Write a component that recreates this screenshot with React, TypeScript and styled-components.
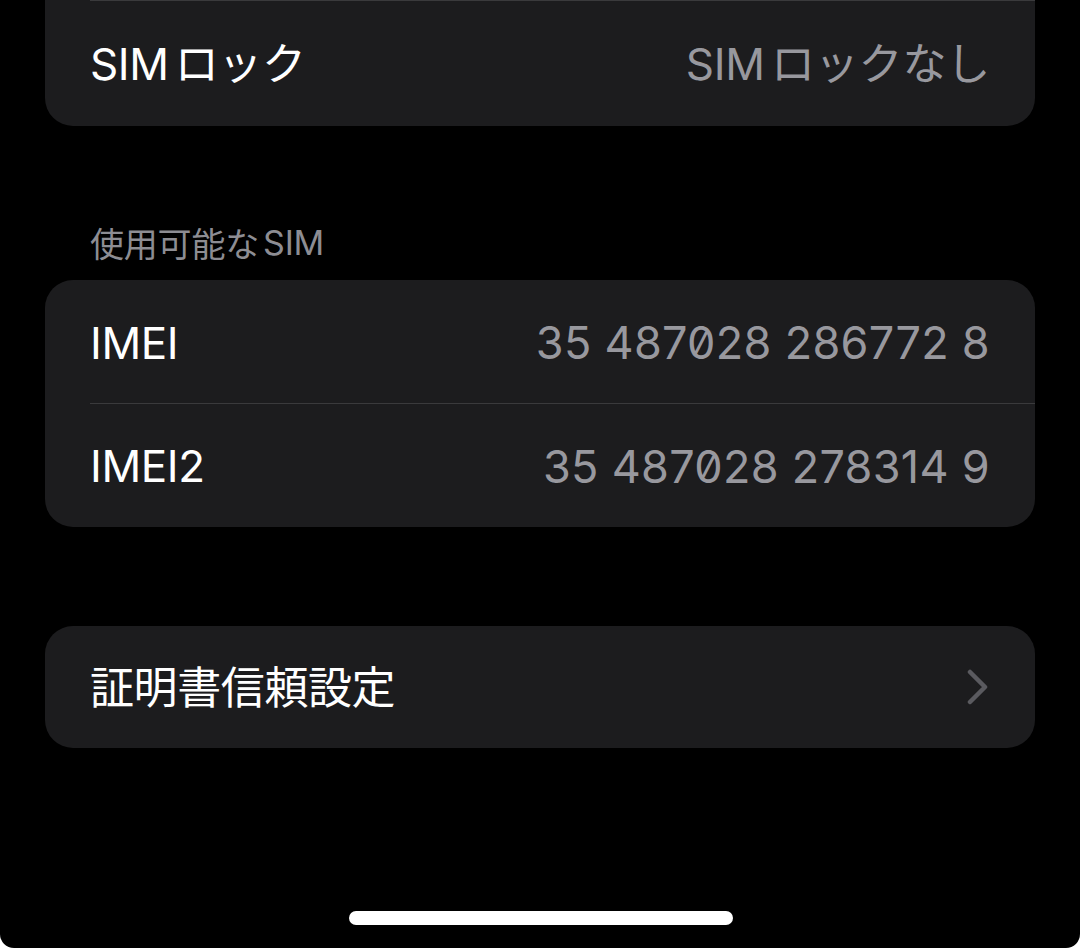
import { FC, ReactNode } from "react";
import styled, { createGlobalStyle } from "styled-components";

const Global = createGlobalStyle`
  html, body {
    margin: 0;
    padding: 0;
    background: #ffffff;
  }
  * {
    box-sizing: border-box;
  }
`;

const Screen = styled.main`
  width: 1080px;
  height: 948px;
  background: #000;
  border-radius: 0 0 14px 14px;
  font-family: Inter, "Noto Sans CJK JP", sans-serif;
  display: flex;
  flex-direction: column;
  padding: 0 45px;
  position: relative;
  overflow: hidden;
`;

const Group = styled.section<{ $cut?: boolean; $gap?: number }>`
  background: #1c1c1e;
  border-radius: ${(p) => (p.$cut ? "0 0 28px 28px" : "28px")};
  margin-top: ${(p) => p.$gap ?? 0}px;
  overflow: hidden;
`;

const Row = styled.div<{ $line?: boolean; $h?: number }>`
  height: ${(p) => p.$h ?? (p.$line ? 124 : 123)}px;
  display: flex;
  align-items: center;
  justify-content: space-between;
  padding: 0 45px;
  position: relative;

  &::before {
    content: "";
    display: ${(p) => (p.$line ? "block" : "none")};
    position: absolute;
    top: 0;
    left: 45px;
    right: 0;
    height: 1px;
    background: #3a3a3c;
  }
`;

const Label = styled.span`
  color: #ffffff;
  font-size: 44px;
  letter-spacing: -0.4px;
  line-height: 1;
  padding-top: 2px;
`;

const Value = styled.span<{ $digits?: boolean }>`
  color: #98989e;
  font-size: ${(p) => (p.$digits ? 45 : 44)}px;
  letter-spacing: ${(p) => (p.$digits ? "0.3px" : "-0.2px")};
  line-height: 1;
  padding-top: 2px;
  font-feature-settings: "zero" 1;
`;

const Latin = styled.span`
  margin-right: 0.14em;
`;

const Header = styled.h2`
  margin: 96px 0 18px;
  padding: 0 45px;
  height: 40px;
  display: flex;
  align-items: center;
  color: #8d8d93;
  font-size: 34px;
  font-weight: 400;
  letter-spacing: -0.2px;
`;

const HeaderLatin = styled.span`
  margin-left: 0.12em;
`;

const HomeBar = styled.div`
  position: absolute;
  left: 349px;
  top: 911px;
  width: 384px;
  height: 14px;
  border-radius: 7px;
  background: #ffffff;
`;

const Chevron: FC = () => (
  <svg width="24" height="36" viewBox="0 0 24 36" aria-hidden="true">
    <polyline
      points="4,3 19,18 4,33"
      fill="none"
      stroke="#5a5a5f"
      strokeWidth="4.5"
      strokeLinecap="round"
      strokeLinejoin="round"
    />
  </svg>
);

const SimText: FC<{ rest: ReactNode }> = ({ rest }) => (
  <>
    <Latin>SIM</Latin>
    {rest}
  </>
);

const App: FC = () => (
  <>
    <Global />
    <Screen>
      <Group $cut>
        <Row $line $h={126}>
          <Label>
            <SimText rest="ロック" />
          </Label>
          <Value>
            <SimText rest="ロックなし" />
          </Value>
        </Row>
      </Group>

      <Header>
        使用可能な<HeaderLatin>SIM</HeaderLatin>
      </Header>
      <Group>
        <Row>
          <Label>IMEI</Label>
          <Value $digits>35 487028 286772 8</Value>
        </Row>
        <Row $line>
          <Label>IMEI2</Label>
          <Value $digits>35 487028 278314 9</Value>
        </Row>
      </Group>

      <Group $gap={99}>
        <Row $h={122}>
          <Label>証明書信頼設定</Label>
          <Chevron />
        </Row>
      </Group>

      <HomeBar />
    </Screen>
  </>
);

export default App;
